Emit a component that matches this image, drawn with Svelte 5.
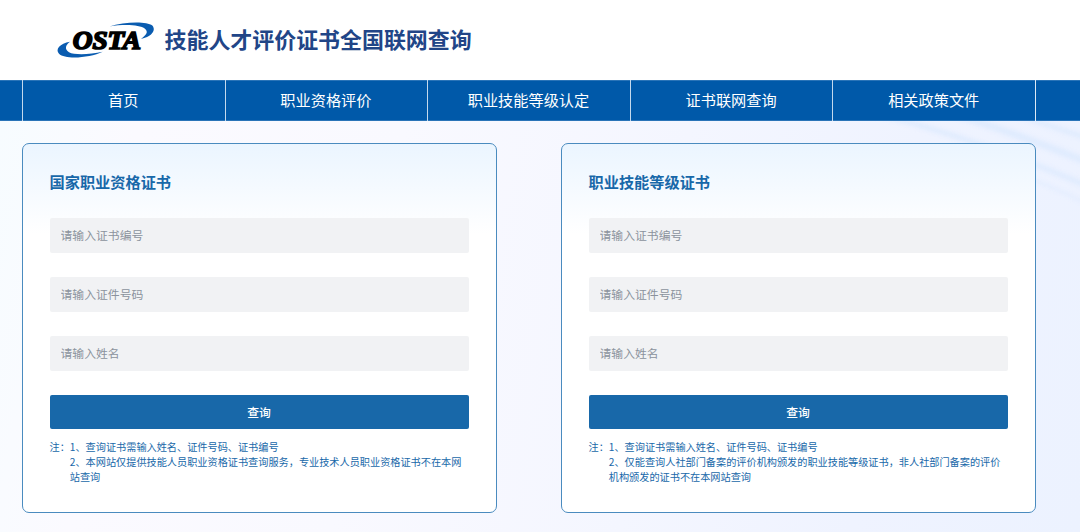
<script lang="ts">
  interface Panel {
    id: string;
    title: string;
    notes: string[];
  }

  const navItems = ["首页", "职业资格评价", "职业技能等级认定", "证书联网查询", "相关政策文件"];

  const fields = [
    { name: "certificate", placeholder: "请输入证书编号" },
    { name: "idNumber", placeholder: "请输入证件号码" },
    { name: "fullName", placeholder: "请输入姓名" },
  ];

  const panels: Panel[] = [
    {
      id: "qualification",
      title: "国家职业资格证书",
      notes: [
        "1、查询证书需输入姓名、证件号码、证书编号",
        "2、本网站仅提供技能人员职业资格证书查询服务，专业技术人员职业资格证书不在本网站查询",
      ],
    },
    {
      id: "skill",
      title: "职业技能等级证书",
      notes: [
        "1、查询证书需输入姓名、证件号码、证书编号",
        "2、仅能查询人社部门备案的评价机构颁发的职业技能等级证书，非人社部门备案的评价机构颁发的证书不在本网站查询",
      ],
    },
  ];

  function handleSubmit(event: SubmitEvent) {
    event.preventDefault();
  }
</script>

<div class="page">
  <header class="header">
    <svg class="logo" viewBox="0 0 294 110" role="img" aria-label="OSTA">
      <path
        fill="#0a5cb0"
        d="M39 59C8 64-6 82 6 95C24 113 98 108 137 89C98 97 52 99 36 90C22 82 25 69 39 59Z"
      />
      <path
        fill="#0a5cb0"
        d="M157 13C200-1 268-4 286 10C300 27 278 46 252 50C268 39 275 30 264 20C248 7 200 6 157 13Z"
      />
      <text x="47" y="82" textLength="205" lengthAdjust="spacingAndGlyphs">OSTA</text>
    </svg>
    <h1>技能人才评价证书全国联网查询</h1>
  </header>

  <nav class="nav">
    <ul>
      {#each navItems as item}
        <li><a href="#top">{item}</a></li>
      {/each}
    </ul>
  </nav>

  <main class="main">
    <svg class="streaks" viewBox="0 0 300 110" aria-hidden="true">
      <g fill="none" stroke="#dfebfe">
        <path stroke-width="5" d="M70-14Q190 14 310 66" />
        <path stroke-width="7" d="M140-18Q225 8 310 42" />
        <path stroke-width="5" d="M210-16Q255 0 310 18" />
        <path stroke-width="2" d="M170 30Q250 54 310 84" />
      </g>
    </svg>
    <div class="panels">
      {#each panels as panel (panel.id)}
        <form class="panel" onsubmit={handleSubmit}>
          <h2>{panel.title}</h2>
          {#each fields as field}
            <input type="text" name={field.name} placeholder={field.placeholder} />
          {/each}
          <button type="submit">查询</button>
          <div class="notes">
            <span>注：</span>
            <div>
              {#each panel.notes as note}
                <p>{note}</p>
              {/each}
            </div>
          </div>
        </form>
      {/each}
    </div>
  </main>
</div>

<style>
  :global(body) {
    margin: 0;
  }

  .page {
    display: flex;
    flex-direction: column;
    height: 532px;
    overflow: hidden;
    background: #fff;
    font-family: "Noto Sans CJK SC", sans-serif;
  }

  .header {
    display: flex;
    align-items: center;
    box-sizing: border-box;
    height: 80px;
    padding: 0 0 0 57px;
  }

  .logo {
    width: 98px;
    height: 37px;
    overflow: visible;
  }

  .logo text {
    font-family: "Liberation Serif", serif;
    font-size: 76px;
    font-weight: 700;
    font-style: italic;
    stroke: #000;
    stroke-width: 5px;
  }

  h1 {
    margin: 0 0 3px 9.5px;
    font-size: 21.95px;
    line-height: 32px;
    font-weight: 700;
    color: #214587;
  }

  .nav {
    height: 41px;
    background: #0059a9;
    box-shadow: inset 0 1px #2a74b8, inset 0 -1px #2a74b8;
  }

  .nav ul {
    display: grid;
    grid-template-columns: repeat(5, 1fr);
    box-sizing: border-box;
    width: 1014px;
    height: 100%;
    margin: 0 0 0 22px;
    padding: 0;
    border-right: 1px solid #dce9f5;
    list-style: none;
  }

  .nav li {
    border-left: 1px solid #c4d9ed;
  }

  .nav a {
    display: block;
    padding-right: 1px;
    font-size: 15.2px;
    line-height: 39px;
    text-align: center;
    text-decoration: none;
    color: #fff;
  }

  .main {
    position: relative;
    flex: 1;
    overflow: hidden;
    background: linear-gradient(100deg, #f7fcff 0%, #fbfaff 12%, #f9f9ff 35%, #f4f6ff 60%, #eff3ff 80%, #ecf2ff 100%);
  }

  .streaks {
    position: absolute;
    top: 0;
    right: 0;
    width: 300px;
    height: 110px;
    overflow: visible;
    filter: blur(2px);
  }

  .panels {
    position: relative;
    display: flex;
    justify-content: space-between;
    width: 1014px;
    padding: 22px 0 0 22px;
  }

  .panel {
    display: flex;
    flex-direction: column;
    box-sizing: border-box;
    width: 475px;
    height: 370px;
    padding: 26px 27px;
    border: 1px solid #4a8bbf;
    border-radius: 7px;
    background: linear-gradient(#ebf5ff 0, #fff 90px);
  }

  h2 {
    margin: -1px 0 25px -0.5px;
    font-size: 15.2px;
    line-height: 24px;
    font-weight: 700;
    color: #1868a9;
  }

  input {
    box-sizing: border-box;
    width: 100%;
    height: 35px;
    margin: 0 0 24px;
    padding: 0 10.5px 2px;
    border: 0;
    border-radius: 2px;
    outline: none;
    background: #f1f2f4;
    font-family: inherit;
    font-size: 11.83px;
    color: #333;
  }

  input::placeholder {
    color: #8b929d;
    opacity: 1;
  }

  button {
    flex: none;
    height: 34px;
    padding: 0 1px 2px 0;
    border: 0;
    border-radius: 2px;
    background: #1868a9;
    font-family: inherit;
    font-size: 11.83px;
    font-weight: 500;
    color: #fff;
    cursor: pointer;
  }

  .notes {
    display: flex;
    margin: 10px 0 0 -0.5px;
    font-size: 10.16px;
    line-height: 15.2px;
    color: #1868a9;
  }

  .notes span {
    flex: none;
  }

  .notes p {
    margin: 0;
  }
</style>
